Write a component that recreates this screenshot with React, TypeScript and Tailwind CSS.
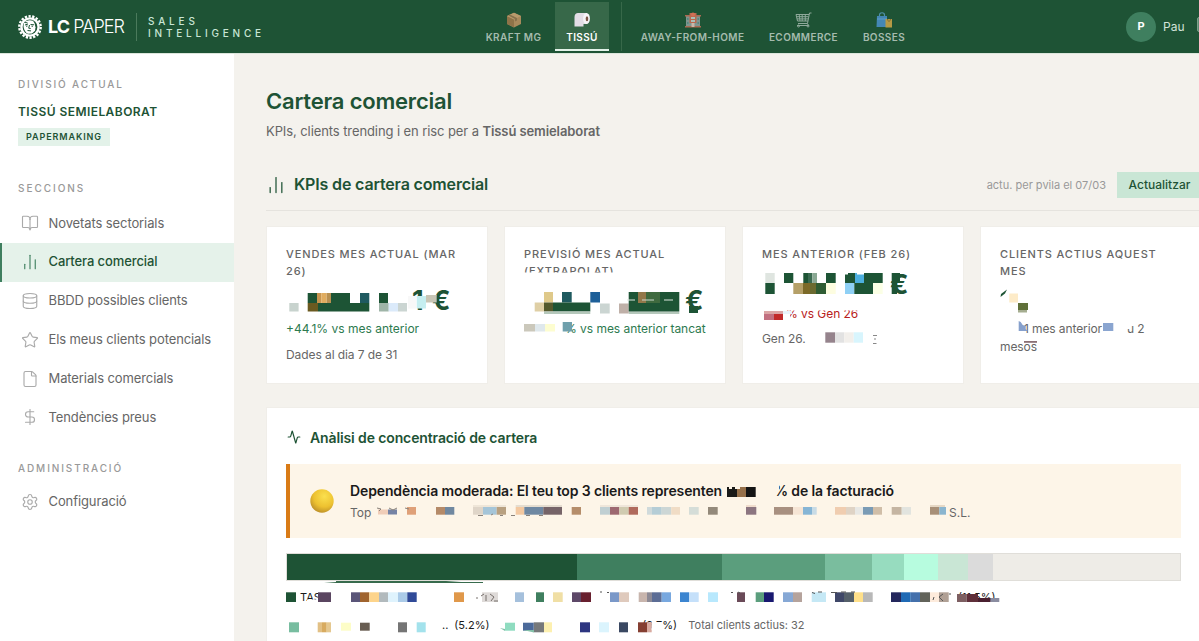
import type { ReactNode } from "react";
import {
  Activity,
  BookOpen,
  ChartNoAxesColumn,
  Database,
  DollarSign,
  File,
  Settings,
  Star,
} from "lucide-react";

// from, to, colour
type Cell = [number, number, string];
type Strip = { y: number; h: number; cells: Cell[] };

const DARK = "#1d5435";

/* Pixelated cover over private figures */
function Mosaic({ x, y, w, h, strips, children }: {
  x: number;
  y: number;
  w: number;
  h: number;
  strips: Strip[];
  children?: ReactNode;
}) {
  return (
    <svg
      className="absolute left-0 top-0 pointer-events-none overflow-visible"
      width={w}
      height={h}
      viewBox={`${x} ${y} ${w} ${h}`}
    >
      {strips.map((s) =>
        s.cells.map(([from, to, fill]) => (
          <rect key={`${s.y}-${from}`} x={from} y={s.y} width={to - from} height={s.h} fill={fill} />
        ))
      )}
      {children}
    </svg>
  );
}

function Gear() {
  return (
    <svg width="24" height="24" viewBox="0 0 24 24">
      <circle cx="12" cy="12" r="10.7" fill="none" stroke="#fff" strokeWidth="2.4" strokeDasharray="2.300 1.435" />
      <circle cx="12" cy="12" r="9.8" fill="#fff" />
      <circle cx="12" cy="12" r="7.4" fill={DARK} />
      <path d="M6 8c2-3 6-3.500 9-2.200l1.500 2.500 1 4-.5 3.500-3 2.800-4 .2C7 17.500 4.500 12.500 6 8z" fill="#fff" />
      <path d="M7 10l3-1M12.500 9.500l3.500.3M11.500 10l-.8 3.200 2 .3M9.500 15.500l3.500.4M8 11.200l1.500-.2M13.500 11.200h1.500M6.500 7.500l3 .3" stroke={DARK} strokeWidth="1" fill="none" />
    </svg>
  );
}

function BoxIcon() {
  return (
    <svg width="16" height="16" viewBox="0 0 16 16">
      <path d="M8 .8l7 3.200v8L8 15.500 1 12V4z" fill="#a88a5c" />
      <path d="M1 4l7 3.500v8L1 12z" fill="#8e7348" />
      <path d="M8 .8L15 4 8 7.500 1 4z" fill="#b89b6c" />
      <path d="M4 2.600l7 3.500v2.500l-2 1V7L2.500 3.400z" fill="#86714c" />
    </svg>
  );
}

function RollIcon() {
  return (
    <svg width="16" height="16" viewBox="0 0 16 16">
      <path d="M4 1h9v11H9.500v2.500H.5V5C.5 2.500 2 1 4 1z" fill="#e3dde6" />
      <ellipse cx="12.500" cy="6.500" rx="3.400" ry="5.600" fill="#f7f4f8" />
      <ellipse cx="13" cy="6.700" rx="1.300" ry="2.500" fill="#7c5547" />
    </svg>
  );
}

function BuildingIcon() {
  return (
    <svg width="16" height="16" viewBox="0 0 16 16">
      <path d="M1 3h14v12H1z" fill="#7f958f" />
      <path d="M0 3h5v1.500H0zM11 3h5v1.500h-5zM0 14h16v1.500H0z" fill="#aa6b53" />
      <path d="M4.500 1h7v10h-7z" fill="#b9694f" />
      <circle cx="8" cy="2.500" r="2" fill="#d36f55" />
      <path d="M6 5h4v2H6zM6 8h4v2H6z" fill="#a9c0b8" />
      <path d="M6.500 11h3v4h-3z" fill="#cbb7a8" />
      <path d="M2 6h1.500v2H2zM2 10h1.500v2H2zM12.500 6H14v2h-1.500zM12.500 10H14v2h-1.500z" fill="#57877f" />
    </svg>
  );
}

function CartIcon() {
  return (
    <svg width="17" height="16" viewBox="0 0 17 16" fill="none" stroke="#8fa99b" strokeWidth="1">
      <path d="M16.500 1h-2l-2 10.500H3M1 2.500h13M1 2.500l1.500 6.500h10.500M1.500 4.700h12M2 6.900h11M4.200 2.500L5 9M7.200 2.500V9M10.300 2.500V9" />
      <path d="M12.500 11.500l1 2H2" />
      <circle cx="3.500" cy="14" r="1" />
      <circle cx="13" cy="14" r="1" />
    </svg>
  );
}

function BagsIcon() {
  return (
    <svg width="17" height="16" viewBox="0 0 17 16">
      <path d="M3.500 5V3c0-3 5-3 5 0v2" fill="none" stroke="#4f90a8" strokeWidth="1.200" />
      <path d="M1 4h10v11H.5z" fill="#4487b5" />
      <path d="M1 6.500h10v1H1z" fill="#5d9dc4" />
      <path d="M9.500 7H16v8.500H9.500z" fill="#b69a45" />
      <path d="M11.500 7c0 3 3 3 3 0" fill="none" stroke="#7e6d35" />
    </svg>
  );
}

function NavTab({ icon, label, width, active }: { icon: ReactNode; label: string; width: string; active?: boolean }) {
  return (
    <div
      className={`flex h-[49px] shrink-0 flex-col items-center pt-[10px] border-b-2 ${width} ${
        active ? "bg-[#376849] border-[#e3f2e9] text-white" : "border-transparent text-[#a5bbae]"
      }`}
    >
      <span className="h-4">{icon}</span>
      <span className="mt-[2px] text-[10px] leading-[15px] font-semibold tracking-[0.4px] whitespace-nowrap">{label}</span>
    </div>
  );
}

function Header() {
  return (
    <header className="flex h-[54px] shrink-0 items-start bg-[#1e5335] border-b border-[#dce6dc]">
      <div className="flex h-[53px] w-[474px] shrink-0 items-center pl-[18px]">
        <Gear />
        <div className="ml-[6px] w-[77px] whitespace-nowrap text-[18px] leading-none text-white">
          <span className="font-bold tracking-[-0.9px]">LC</span>
          <span className="ml-[4px] font-light tracking-[-0.95px]">PAPER</span>
        </div>
        <div className="ml-[11px] h-7 w-px bg-[#4b7a5c]" />
        <div className="ml-[11px] text-[10px] leading-[12px] font-medium tracking-[3.800px] text-[#c9e6d5]">
          SALES
          <br />
          INTELLIGENCE
        </div>
      </div>
      <nav className="flex h-[53px] shrink-0 pt-[2px]">
        <NavTab width="w-[79px]" icon={<BoxIcon />} label="KRAFT MG" />
        <div className="w-[2px]" />
        <NavTab width="w-[54px]" icon={<RollIcon />} label="TISSÚ" active />
        <div className="ml-[12px] mr-[7px] h-[49px] w-px bg-[#376849]" />
        <NavTab width="w-[127px]" icon={<BuildingIcon />} label="AWAY-FROM-HOME" />
        <NavTab width="w-[95px]" icon={<CartIcon />} label="ECOMMERCE" />
        <NavTab width="w-[66px]" icon={<BagsIcon />} label="BOSSES" />
      </nav>
      <div className="ml-auto mr-[14px] flex h-[53px] items-center">
        <div className="flex size-[30px] items-center justify-center rounded-full bg-[#3f7f5f] text-[11px] font-bold text-white">P</div>
        <span className="ml-[7px] w-[34px] text-[12px] text-[#d3e3d9]">Pau</span>
        <div className="mb-1 h-[15px] w-[23px] rounded-[2px] border border-[#7d9f8b] bg-[#5d8a70]" />
      </div>
    </header>
  );
}

const sections = [
  { icon: BookOpen, label: "Novetats sectorials" },
  { icon: ChartNoAxesColumn, label: "Cartera comercial", active: true },
  { icon: Database, label: "BBDD possibles clients" },
  { icon: Star, label: "Els meus clients potencials" },
  { icon: File, label: "Materials comercials" },
  { icon: DollarSign, label: "Tendències preus" },
];

function Sidebar() {
  return (
    <aside className="w-[234px] shrink-0 bg-white pt-[23px]">
      <div className="px-[18px]">
        <div className="text-[10px] leading-[14px] tracking-[1.850px] font-medium text-[#999]">DIVISIÓ ACTUAL</div>
        <div className="mt-[12px] text-[12px] leading-[18px] font-semibold tracking-[0.450px] text-[#1e5335]">TISSÚ SEMIELABORAT</div>
        <div className="mt-[7px] flex h-[18px] w-[92px] items-center bg-[#e3f2e9] px-2 text-[9px] font-semibold tracking-[0.9px] text-[#1e5335]">
          PAPERMAKING
        </div>
      </div>
      <div className="mt-[35px] px-[18px] text-[10px] leading-[14px] tracking-[1.950px] font-medium text-[#999]">SECCIONS</div>
      <nav className="mt-[9px] flex flex-col">
        {sections.map(({ icon: Icon, label, active }) => (
          <div
            key={label}
            className={`flex h-[38.8px] items-center border-l-2 pl-[19px] text-[13px] tracking-[-0.1px] ${
              active
                ? "border-[#3f7f5f] bg-[#e5f2ea] font-medium text-[#1e5335]"
                : "border-transparent text-[#666]"
            }`}
          >
            <Icon size={18} strokeWidth={1.5} className={active ? "text-[#3f7f5f]" : "text-[#aaa]"} />
            <span className="ml-[9.500px]">{label}</span>
          </div>
        ))}
      </nav>
      <div className="mt-[24px] px-[18px] text-[10px] leading-[14px] tracking-[1.9px] font-medium text-[#999]">ADMINISTRACIÓ</div>
      <div className="mt-[8px] flex h-[38.8px] items-center pl-[21px] text-[13px] tracking-[-0.1px] text-[#666]">
        <Settings size={18} strokeWidth={1.5} className="text-[#aaa]" />
        <span className="ml-[9.500px]">Configuració</span>
      </div>
    </aside>
  );
}

function Card({ label, children }: { label: ReactNode; children: ReactNode }) {
  return (
    <div className="h-[158px] border border-[#f0eee9] bg-white pl-[19px] pt-[19px]">
      <div className="text-[11px] leading-[16.500px] font-medium tracking-[0.880px] text-[#666]">{label}</div>
      {children}
    </div>
  );
}

function Kpis() {
  return (
    <div className="mt-[15px] grid grid-cols-4 gap-4">
      <Card label={<>VENDES MES ACTUAL (MAR<br />26)</>}>
        <div className="relative mt-[7px] flex h-[31px] items-center text-[27px] font-bold text-[#1e5335]">
          <span className="ml-[126px] w-[20px]">1</span>
          <span>€</span>
          <Mosaic
            x={286} y={286} w={190} h={31}
            strips={[
              { y: 293, h: 10, cells: [[307.7, 317, DARK], [317, 321.3, "#c8954f"], [321.3, 326.7, "#e0ac5f"], [326.7, 331, "#b89050"], [331, 350, DARK], [360, 369.3, "#1f5a60"], [379, 388, DARK]] },
              { y: 303, h: 8.5, cells: [[289.3, 298.6, "#c8d3ce"], [307.7, 318, "#6b5a20"], [318, 369.3, DARK], [379, 388.7, "#9fb5a8"], [388.7, 398, "#dbeafa"], [398, 407, "#cbd5d2"]] },
              { y: 296, h: 12.500, cells: [[408, 416, "#f8f8f8"], [416.7, 426, "#c5eef0"]] },
              { y: 295, h: 7.500, cells: [[426, 436.7, "#c8c5b5"]] },
            ]}
          />
        </div>
        <div className="mt-[3px] text-[12px] leading-[18px] text-[#2d7a4f]">+44.1% vs mes anterior</div>
        <div className="mt-[8px] text-[12px] leading-[18px] tracking-[-0.080px] text-[#666]">Dades al dia 7 de 31</div>
      </Card>

      <Card label={<>PREVISIÓ MES ACTUAL<br />(EXTRAPOLAT)</>}>
        <div className="relative mt-[7px] flex h-[31px] items-center text-[27px] font-bold text-[#1e5335]">
          <span className="ml-[161px]">€</span>
          <Mosaic
            x={524} y={286} w={190} h={31}
            strips={[
              { y: 272.500, h: 7, cells: [[522, 620, "#fff"]] },
              { y: 292, h: 10.500, cells: [[544, 553, "#dfc98a"], [562, 571.7, "#1f5a5f"], [590.3, 600, "#1d5f98"]] },
              { y: 302.500, h: 9, cells: [[534.7, 544, "#dfcfa5"], [544, 553, "#54592c"], [553, 590.3, DARK]] },
              { y: 311.500, h: 2.500, cells: [[544, 590.3, "#b5c8bb"], [628.7, 679.3, "#b5c8bb"]] },
              { y: 303.500, h: 10, cells: [[600, 609.7, "#cbd5d2"], [619, 628.7, "#bfb0a8"]] },
              { y: 292, h: 19.500, cells: [[628.7, 679.3, DARK]] },
              { y: 292, h: 11, cells: [[638, 646, "#93784a"], [646, 660, "#3f6a3f"]] },
              { y: 299.500, h: 1, cells: [[627, 635, "#dde8e0"], [642, 654, "#c9d8cd"], [664, 673, "#dde8e0"]] },
              { y: 306, h: 7, cells: [[689, 698, DARK]] },
            ]}
          />
        </div>
        <div className="relative mt-[3px] h-[18px] pl-[41px] text-[12px] leading-[18px] tracking-[-0.040px] whitespace-nowrap text-[#2d7a4f]">
          % vs mes anterior tancat
          <Mosaic
            x={524} y={320} w={190} h={18}
            strips={[
              { y: 324, h: 7.500, cells: [[524, 535, "#cbc8bb"], [535, 545, "#dfe8ec"], [545, 555, "#fdfdd0"]] },
              { y: 322, h: 9.500, cells: [[562.7, 572, "#6fa0ac"]] },
            ]}
          />
        </div>
      </Card>

      <Card label="MES ANTERIOR (FEB 26)">
        <div className="relative mt-[7px] flex h-[31px] items-center text-[27px] font-bold text-[#1e5335]">
          <span className="ml-[128px]">€</span>
          <Mosaic
            x={762} y={269.500} w={190} h={31}
            strips={[
              { y: 272.500, h: 10, cells: [[765.3, 774.7, "#dfe5e0"], [784, 793.3, DARK], [803.3, 808, DARK], [808, 812.3, "#3a6a50"], [812.3, 817, "#8aa893"], [826, 835.7, DARK], [845, 855, DARK], [855, 864, "#4db0df"], [864, 882.7, DARK], [891.7, 900, DARK]] },
              { y: 282.500, h: 11, cells: [[765.3, 774.7, DARK], [793.3, 803, "#b5a068"], [803, 810, "#7c6a28"], [810, 816, "#6b6a30"], [816, 826, "#2f5c33"], [826, 835.7, "#fdfde0"], [845, 854.3, "#8fd0f5"], [854.3, 873, DARK], [873, 882.7, "#fbffe5"], [891.7, 897, DARK]] },
              { y: 272, h: 2, cells: [[845, 848, "#fff"], [857, 864, "#fff"]] },
            ]}
          />
        </div>
        <div className="relative mt-[4px] h-[18px] pl-[24px] text-[12px] leading-[18px] tracking-[-0.050px] text-[#b82020]">
          % vs Gen 26
          <Mosaic
            x={762} y={304} w={190} h={18}
            strips={[
              { y: 304, h: 5.500, cells: [[784, 860, "#fff"]] },
              { y: 310, h: 3, cells: [[764, 783, "#dba6a6"], [783, 792, "#e9f4fb"]] },
              { y: 313, h: 6, cells: [[764, 774, "#c27080"], [774, 783, "#c22a2a"], [784, 790, "#fff"]] },
            ]}
          />
        </div>
        <div className="relative mt-[7px] h-[18px] text-[12px] leading-[18px] tracking-[-0.1px] text-[#666]">
          Gen 26.
          <Mosaic
            x={762} y={329} w={190} h={18}
            strips={[
              { y: 331.300, h: 10.400, cells: [[825.3, 835, "#95838c"], [835, 844.3, "#e2e2e2"], [844.3, 853.7, "#f2efeb"], [853.7, 863, "#d8f5fd"]] },
            ]}
          >
            <path d="M873 334.500h4M874 338h2M873 342.500h3.500" stroke="#888" strokeWidth="1" />
          </Mosaic>
        </div>
      </Card>

      <Card label={<>CLIENTS ACTIUS AQUEST<br />MES</>}>
        <div className="relative mt-[7px] h-[31px]">
          <Mosaic
            x={1000} y={286} w={190} h={31}
            strips={[
              { y: 293.500, h: 9, cells: [[1009.300, 1018, "#fdebc8"]] },
              { y: 303, h: 7, cells: [[1018, 1028, "#5f7039"]] },
              { y: 310, h: 2.500, cells: [[1018, 1027, "#a5ad90"]] },
            ]}
          >
            <path d="M1000.500 297l.5-3 6-4.500-2 4z" fill={DARK} />
          </Mosaic>
        </div>
        <div className="relative mt-[3px] text-[12px] leading-[18px] tracking-[-0.1px] text-[#666]">
          <span className="ml-[24px] inline-block w-[8px]">1</span>
          <span className="inline-block w-[95px]">mes anterior</span>
          <span>u 2</span>
          <br />
          mesos
          <Mosaic
            x={1000} y={320} w={190} h={36}
            strips={[
              { y: 323, h: 8, cells: [[1103, 1113.300, "#8aa5d0"]] },
              { y: 320, h: 9, cells: [[1125, 1130, "#fff"]] },
              { y: 341, h: 1.800, cells: [[1024, 1037, "#8b7075"]] },
            ]}
          >
            <path d="M1018.700 321l2 1 2 3 3 1v3l2 2h-9z" fill="#86a0cc" />
          </Mosaic>
        </div>
      </Card>
    </div>
  );
}

const clientsMosaic: Strip[] = [
  {
    y: 507,
    h: 7.700,
    cells: [
      [407, 416, "#dfa078"], [436, 445, "#b58a68"], [445, 454.3, "#7088a0"], [473, 483, "#dfd5c8"], [483, 496.7, "#a5c5d8"],
      [496.7, 506, "#b8a080"], [515.7, 524.3, "#f3c8a0"], [524.3, 543.3, "#6f88a2"], [543.3, 562, "#766468"], [571.7, 581, "#b58d6a"],
      [600, 610, "#c0cfd2"], [610, 619.3, "#9d6870"], [619.3, 628.7, "#d0cbb0"], [628.7, 638, "#b06a5c"], [647, 652, "#d0dadb"],
      [652, 661.7, "#b5cdd6"], [661.7, 671.3, "#ccd6d5"], [671.3, 680, "#f0dcc5"], [689, 698.7, "#d5ddd8"], [708, 717.7, "#93897a"],
      [746, 756.3, "#8c7580"], [774, 793, "#a89080"], [793, 803, "#f6e5d5"], [803, 812, "#86b5d5"], [812, 816.7, "#c8dbe5"],
      [835, 846, "#f0cdb0"], [846, 855, "#dfd3c5"], [855, 863, "#e8e8e5"], [863, 873, "#7a9bb5"], [873, 882, "#d0bea8"],
      [891.7, 901.7, "#c5b5a2"], [901.7, 911, "#e2e4df"], [930, 939.3, "#a89078"], [939.3, 946, "#8ab5cf"],
    ],
  },
  { y: 509.500, h: 5, cells: [[378, 388, "#f0cdb8"], [388, 397, "#7583a5"]] },
  { y: 505, h: 2, cells: [[473, 506, "#efe6d8"], [515.700, 562, "#e5ddd0"], [600, 638, "#efe6da"], [746, 756, "#f0dccc"], [930, 945, "#e6d8c5"]] },
];

const legendMosaic: Strip[] = [
  {
    y: 592.300,
    h: 9.700,
    cells: [
      [286, 296, "#1e5335"], [318, 331, "#5a4560"], [351, 360, "#5a5578"], [360, 369.3, "#a0642f"], [369.3, 379, "#fdd48b"],
      [379, 388, "#b2babd"], [388, 398, "#dff3fd"], [398, 407.3, "#abcbe8"], [407.3, 416.7, "#304a98"], [454, 464, "#e0984a"],
      [482, 498, "#dedad8"], [515, 524, "#a5c0dc"], [536, 544, "#3f7f5f"], [553, 562.7, "#f0dfa5"], [572, 581, "#5d4868"],
      [581, 591, "#68202f"], [610, 619, "#7a98c8"], [619, 629, "#dfcabd"], [638.7, 647, "#c8b5ad"], [647, 652, "#8d8a95"],
      [652, 661.7, "#5c6d95"], [661.7, 671, "#78a8df"], [680, 689, "#3c85d0"], [689, 698.7, "#c5e0fa"], [708, 718, "#b8e8fd"],
      [737, 745, "#6a4a58"], [755.7, 764, "#5b9e7d"], [764, 773.7, "#181870"], [783, 793, "#86a8d5"], [793, 802, "#b5a39c"],
      [811.7, 826, "#c5e8f5"], [835, 844, "#3f4768"], [844, 854, "#55606a"], [854, 863, "#ffe08a"], [863, 872.7, "#b8b8b8"],
      [891, 901, "#23275c"], [901, 910.7, "#1f6ab5"], [910.7, 920, "#4470ab"], [920, 930, "#62635a"], [930, 939, "#fdebdc"],
      [939, 948.7, "#b0a095"],
    ],
  },
  { y: 594, h: 8, cells: [[957, 966.7, "#7d5f62"], [966.7, 978, "#5f2f3a"]] },
  { y: 598, h: 4, cells: [[978, 990.7, "#4a2030"], [990.7, 999.3, "#8a8ca0"]] },
];

const legendMosaic2: Strip[] = [
  {
    y: 622.300,
    h: 10,
    cells: [
      [289, 299, "#78bda0"], [317.7, 322, "#e2c085"], [322, 326.7, "#d8ab60"], [326.7, 331, "#e5c890"], [398, 407, "#757575"],
      [416.7, 425.7, "#a3e2ec"], [533.7, 544, "#77797a"], [544, 552, "#fdf0b0"], [580, 590, "#2d3580"], [599, 609, "#dbf4fd"],
      [619, 628, "#3a4862"], [638, 647, "#853f32"], [647, 651.7, "#d8aaa0"],
    ],
  },
  { y: 622.700, h: 8, cells: [[341, 351, "#fdfdc8"], [360, 369.7, "#685d52"], [505, 515, "#8fdcc0"], [523, 533.7, "#4c6a9a"]] },
  { y: 622, h: 8, cells: [[651.700, 663, "#fff"]] },
];

function ShareBar() {
  return (
    <div className="relative mt-[15px] flex h-[28px] border border-[#e0ded9] bg-[#eeece7]">
      <div className="w-[289.500px] bg-[#1e5335]" />
      <div className="w-[145.500px] bg-[#3f7f5f]" />
      <div className="w-[103px] bg-[#5b9e7d]" />
      <div className="w-[46.500px] bg-[#7abd9e]" />
      <div className="w-[32.500px] bg-[#97dcbf]" />
      <div className="w-[34px] bg-[#b7fcdf]" />
      <div className="w-[30px] bg-[#c9e6d5]" />
      <div className="w-[25px] bg-[#dbdbdb]" />
      <svg className="absolute left-[37px] top-[26px]" width="160" height="4">
        <path d="M12 1h110l15 1h22v1H0l12-1z" fill="#386b4d" />
      </svg>
    </div>
  );
}

function Concentration() {
  return (
    <section className="mt-[23px] h-[260px] border border-[#f0eee9] bg-white pl-[19px] pr-5 pt-[19px]">
      <div className="flex h-[20px] items-center pl-px text-[#1e5335]">
        <Activity size={14} strokeWidth={2} />
        <h3 className="ml-[9px] text-[14px] font-semibold tracking-[-0.120px]">Anàlisi de concentració de cartera</h3>
      </div>
      <div className="mt-[17px] flex h-[74px] items-center border-l-4 border-[#d97b16] bg-[#fdf5e8] pl-[19px]">
        <svg width="26" height="26" viewBox="0 0 26 26">
          <defs>
            <radialGradient id="ball" cx="0.6" cy="0.3" r="0.75">
              <stop offset="0" stopColor="#fbe04e" />
              <stop offset="0.6" stopColor="#edc130" />
              <stop offset="1" stopColor="#b98c28" />
            </radialGradient>
          </defs>
          <circle cx="13" cy="13" r="11.700" fill="url(#ball)" />
        </svg>
        <div className="ml-[15px]">
          <div className="relative flex h-[20px] w-[800px] items-center text-[14px] font-semibold tracking-[-0.120px] whitespace-nowrap text-[#1a1a1a]">
            <span className="w-[424px]">Dependència moderada: El teu top 3 clients representen</span>
            <span>% de la facturació</span>
            <Mosaic
              x={350} y={480} w={600} h={21}
              strips={[
                { y: 487, h: 10, cells: [[727, 737, "#1a1a18"], [737, 746, "#96704a"], [746, 755.7, "#141414"]] },
                { y: 486, h: 3, cells: [[729, 732, "#fdf5e8"], [735, 740, "#fdf5e8"]] },
                { y: 483, h: 8, cells: [[772, 779, "#fdf5e8"]] },
              ]}
            />
          </div>
          <div className="relative mt-[4px] flex h-[18px] w-[800px] items-center text-[12px] text-[#666]">
            <span className="w-[599px]">Top</span>
            <span>S.L.</span>
            <Mosaic x={350} y={504} w={620} h={18} strips={clientsMosaic}>
              <path d="M377 508l4 1-2 2M389 508l4 2 4-2M405 508l4 1M478 515.500h5M491 515l2-1M500 515.500h3M511 515.500h4M526 515.500h4M539 515.500h4" stroke="#8a827a" fill="none" />
            </Mosaic>
          </div>
        </div>
      </div>
      <ShareBar />
      <div className="relative mt-[7px] flex h-[18px] items-center text-[11px] text-[#1a1a1a]">
        <span className="ml-[14px] w-[658px]">TASK</span>
        <span>(11.5%)</span>
        <Mosaic x={286} y={588} w={740} h={18} strips={legendMosaic}>
          <path d="M307 599.500h11v4h-11z" fill="#fff" />
          <path d="M476 598h2M484 594l-3 2M486 595v6M490 594l4 3-3 4M494 601h4" stroke="#77706d" fill="none" />
          <path d="M600 592h2M607 592.500h2M731 592.500h2M738 592l2 1M812 592.500l3 1M818 592h4M831 592.500h6M841 592h5M851 592h4M934 597l-1 3M943 594l-4 3 4 4M950 593v2" stroke="#555" fill="none" />
        </Mosaic>
      </div>
      <div className="relative mt-[10px] flex h-[18px] items-center text-[11px] text-[#1a1a1a]">
        <span className="ml-[156px]">..</span>
        <span className="ml-[6px] w-[188px]">(5.2%)</span>
        <span className="w-[46px]">(9.7%)</span>
        <span className="text-[#666]">Total clients actius: 32</span>
        <Mosaic x={286} y={616} w={740} h={18} strips={legendMosaic2}>
          <path d="M500 628l5 1v2zM523 630l11 0v2.500z" fill="#83bfa8" />
        </Mosaic>
      </div>
    </section>
  );
}

export default function App() {
  return (
    <div className="h-[641px] w-full overflow-hidden font-['Inter','Liberation_Sans',sans-serif]">
      <div className="flex h-[641px] w-[1234px] flex-col bg-[#f4f2ed]">
        <Header />
        <div className="flex min-h-0 flex-1">
          <Sidebar />
          <main className="w-[1000px] shrink-0 pl-8 pr-8 pt-[32px]">
            <h1 className="text-[22px] leading-[31px] font-semibold tracking-[-0.2px] text-[#1e5335]">Cartera comercial</h1>
            <p className="mt-[5px] text-[13px] leading-[19px] tracking-[-0.090px] text-[#666]">
              KPIs, clients trending i en risc per a <strong className="font-semibold">Tissú semielaborat</strong>
            </p>
            <div className="mt-[31px] flex h-[39px] items-start border-b border-[#e5e3de] text-[#1e5335]">
              <ChartNoAxesColumn size={20} strokeWidth={1.5} className="mt-[3px]" />
              <h2 className="ml-[8px] text-[16px] leading-[25px] font-semibold tracking-[-0.150px]">KPIs de cartera comercial</h2>
              <span className="ml-auto text-[11px] leading-[26px] text-[#999]">actu. per pvila el 07/03</span>
              <button className="ml-[11px] h-[26px] w-[85px] bg-[#c9e6d5] text-[12px] font-medium">Actualitzar</button>
            </div>
            <Kpis />
            <Concentration />
          </main>
        </div>
      </div>
    </div>
  );
}
